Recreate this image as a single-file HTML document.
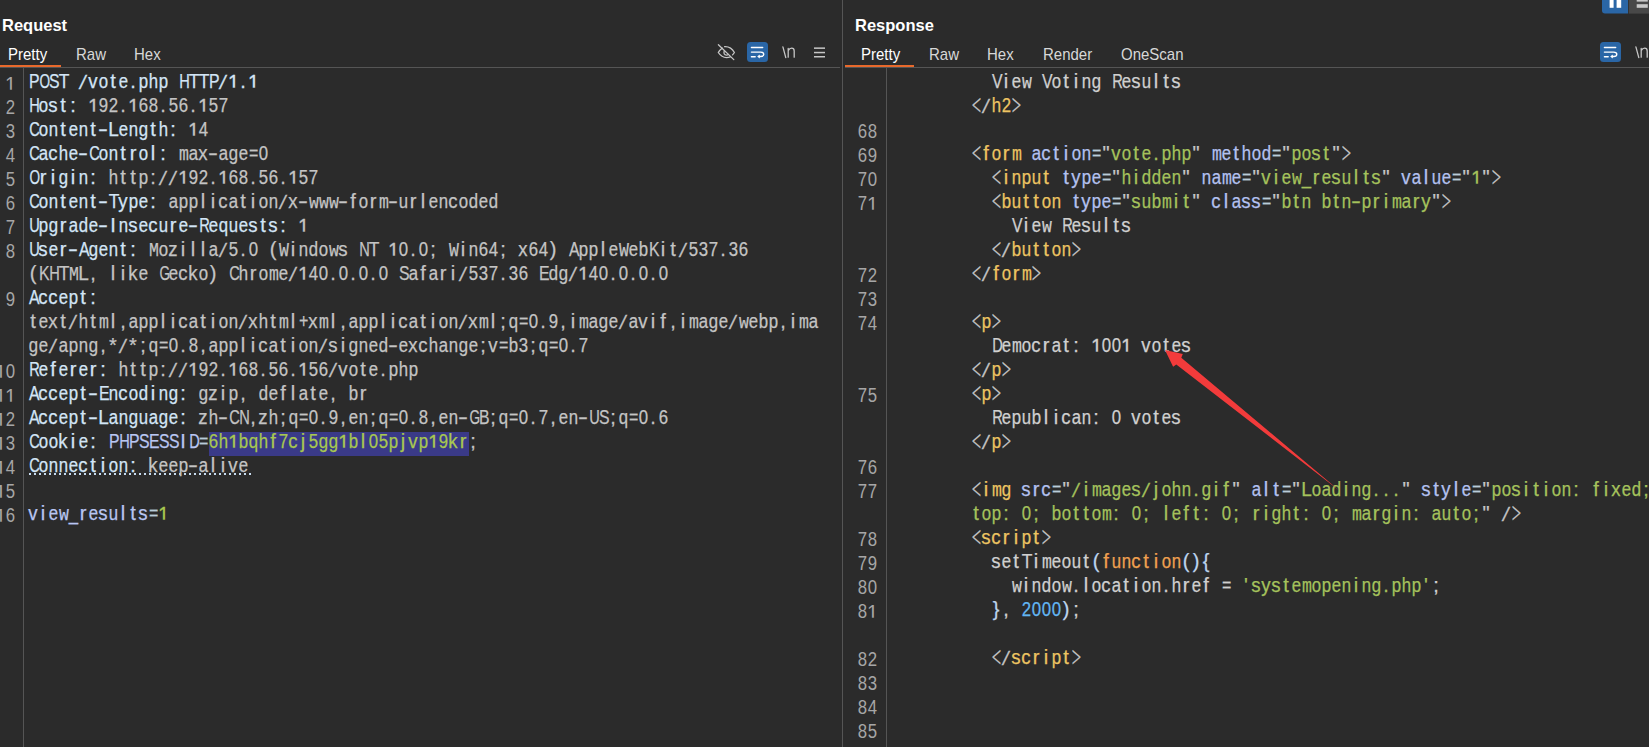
<!DOCTYPE html>
<html><head><meta charset="utf-8"><style>
*{margin:0;padding:0;box-sizing:border-box}
html,body{width:1649px;height:747px;overflow:hidden;background:#2b2b2b}
body{position:relative;font-family:"Liberation Sans",sans-serif}
.abs{position:absolute}
.title{position:absolute;top:14px;font-weight:bold;font-size:16.5px;color:#ffffff;line-height:22px}
.tab{position:absolute;top:43px;font-size:15px;color:#d8d8d8;line-height:22px;transform:scaleY(1.08);transform-origin:0 6px}
.hline{position:absolute;top:67px;height:1px;background:#555555}
.orange{position:absolute;top:65px;height:2px;background:#e8692c}
.vline{position:absolute;width:1px;background:#555555}
.lnbox{position:absolute;top:0;bottom:0;overflow:hidden}
.ln{position:absolute;height:24px;line-height:24px;font-family:"Liberation Sans",sans-serif;font-size:20px;color:#a6a6a6;white-space:pre;text-align:right}
.ln i{font-style:normal;display:inline-block;width:10px;text-align:center}
.code{position:absolute;height:24px;line-height:24px;font-family:"Liberation Sans",sans-serif;font-size:20px;white-space:pre}
.code i{font-style:normal;display:inline-block;width:10px;text-align:center;-webkit-text-stroke:0.25px currentColor}
.hn{color:#d3e5f6}
.hv{color:#c4c4c4}
.ck{color:#b9c6f2}
.gr{color:#a8c850}
.tx{color:#d0d0d0}
.pu{color:#c6c6c6}
.tag{color:#edc462}
.at{color:#b3c1f0}
.av{color:#a5c25c}
.kw{color:#f0a050}
.br{color:#bcd4ee}
.num{color:#62b6f2}
.eq{color:#b9ccd9}

.hlbox{position:absolute;background:#3a3a88}
.code i.ang,.ln i.ang{font-family:"Liberation Serif",serif;transform:scale(0.83,1.5);transform-origin:50% 12.2px}
.code i.mo,.ln i.mo{font-family:"Liberation Mono",monospace;transform:scaleX(0.825)}
.code i.one,.ln i.one{clip-path:inset(0 0 7px 0);transform:scaleY(1.14);transform-origin:50% 5.2px}
.code i.sl,.ln i.sl{font-family:"Liberation Serif",serif;transform:scale(1.5,1.1);transform-origin:50% 12px}
.code i.sx150,.ln i.sx150{transform:scaleX(1.5)}
.code i.sx68,.ln i.sx68{transform:scaleX(0.68)}
.code i.sx73,.ln i.sx73{transform:scaleX(0.73)}
.code i.sx79,.ln i.sx79{transform:scaleX(0.79)}
.code i.sx80,.ln i.sx80{transform:scaleX(0.8)}
.code i.sx84,.ln i.sx84{transform:scaleX(0.84)}
.code i.sx87,.ln i.sx87{transform:scaleX(0.87)}
.code i.sx93,.ln i.sx93{transform:scaleX(0.93)}
.code i.sx95,.ln i.sx95{transform:scaleX(0.95)}

.dot{text-decoration:underline dotted #b8d4ee;text-underline-offset:3px}
</style></head><body>
<!-- left panel -->
<div class="title" style="left:2px">Request</div>
<div class="tab" style="left:8px;color:#ffffff">Pretty</div>
<div class="tab" style="left:76px">Raw</div>
<div class="tab" style="left:134px">Hex</div>
<div class="orange" style="left:0;width:61px"></div>
<div class="hline" style="left:0;width:840px"></div>
<div class="vline" style="left:23px;top:68px;height:679px"></div>
<div class="hlbox" style="left:209px;top:432px;width:260px;height:24px"></div>
<div class="abs" style="left:29px;top:473px;width:223px;height:2px;background:repeating-linear-gradient(90deg,#c8dcf0 0,#c8dcf0 2px,transparent 2px,transparent 5px)"></div>
<div class="lnbox" style="left:0;width:20px;top:0;height:747px">
<div class="ln" style="top:71px;right:5px"><i class="one">1</i></div>
<div class="ln" style="top:95px;right:5px"><i class="sx84">2</i></div>
<div class="ln" style="top:119px;right:5px"><i class="sx84">3</i></div>
<div class="ln" style="top:143px;right:5px"><i class="sx84">4</i></div>
<div class="ln" style="top:167px;right:5px"><i class="sx84">5</i></div>
<div class="ln" style="top:191px;right:5px"><i class="sx84">6</i></div>
<div class="ln" style="top:215px;right:5px"><i class="sx84">7</i></div>
<div class="ln" style="top:239px;right:5px"><i class="sx84">8</i></div>
<div class="ln" style="top:287px;right:5px"><i class="sx84">9</i></div>
<div class="ln" style="top:359px;right:5px"><i class="one">1</i><i class="sx84">0</i></div>
<div class="ln" style="top:383px;right:5px"><i class="one">1</i><i class="one">1</i></div>
<div class="ln" style="top:407px;right:5px"><i class="one">1</i><i class="sx84">2</i></div>
<div class="ln" style="top:431px;right:5px"><i class="one">1</i><i class="sx84">3</i></div>
<div class="ln" style="top:455px;right:5px"><i class="one">1</i><i class="sx84">4</i></div>
<div class="ln" style="top:479px;right:5px"><i class="one">1</i><i class="sx84">5</i></div>
<div class="ln" style="top:503px;right:5px"><i class="one">1</i><i class="sx84">6</i></div>
</div>
<div class="code" style="top:69px;left:28px"><span class="hn"><i class="sx79">P</i><i class="sx68">O</i><i class="sx79">S</i><i class="sx87">T</i><i> </i><i class="sl">/</i><i class="sx93">v</i><i class="sx84">o</i><i>t</i><i class="sx84">e</i><i>.</i><i class="sx84">p</i><i class="sx84">h</i><i class="sx84">p</i><i> </i><i class="sx73">H</i><i class="sx87">T</i><i class="sx87">T</i><i class="sx79">P</i><i class="sl">/</i><i class="one">1</i><i>.</i><i class="one">1</i></span></div><div class="code" style="top:93px;left:28px"><span class="hn"><i class="sx73">H</i><i class="sx84">o</i><i class="sx93">s</i><i>t</i><i>:</i></span><span class="hv"><i> </i><i class="one">1</i><i class="sx84">9</i><i class="sx84">2</i><i>.</i><i class="one">1</i><i class="sx84">6</i><i class="sx84">8</i><i>.</i><i class="sx84">5</i><i class="sx84">6</i><i>.</i><i class="one">1</i><i class="sx84">5</i><i class="sx84">7</i></span></div><div class="code" style="top:117px;left:28px"><span class="hn"><i class="sx73">C</i><i class="sx84">o</i><i class="sx84">n</i><i>t</i><i class="sx84">e</i><i class="sx84">n</i><i>t</i><i class="sx150">-</i><i class="sx95">L</i><i class="sx84">e</i><i class="sx84">n</i><i class="sx84">g</i><i>t</i><i class="sx84">h</i><i>:</i></span><span class="hv"><i> </i><i class="one">1</i><i class="sx84">4</i></span></div><div class="code" style="top:141px;left:28px"><span class="hn"><i class="sx73">C</i><i class="sx84">a</i><i class="sx93">c</i><i class="sx84">h</i><i class="sx84">e</i><i class="sx150">-</i><i class="sx73">C</i><i class="sx84">o</i><i class="sx84">n</i><i>t</i><i>r</i><i class="sx84">o</i><i>l</i><i>:</i></span><span class="hv"><i> </i><i class="mo">m</i><i class="sx84">a</i><i class="sx93">x</i><i class="sx150">-</i><i class="sx84">a</i><i class="sx84">g</i><i class="sx84">e</i><i class="sx80">=</i><i class="sx84">0</i></span></div><div class="code" style="top:165px;left:28px"><span class="hn"><i class="sx68">O</i><i>r</i><i>i</i><i class="sx84">g</i><i>i</i><i class="sx84">n</i><i>:</i></span><span class="hv"><i> </i><i class="sx84">h</i><i>t</i><i>t</i><i class="sx84">p</i><i>:</i><i class="sl">/</i><i class="sl">/</i><i class="one">1</i><i class="sx84">9</i><i class="sx84">2</i><i>.</i><i class="one">1</i><i class="sx84">6</i><i class="sx84">8</i><i>.</i><i class="sx84">5</i><i class="sx84">6</i><i>.</i><i class="one">1</i><i class="sx84">5</i><i class="sx84">7</i></span></div><div class="code" style="top:189px;left:28px"><span class="hn"><i class="sx73">C</i><i class="sx84">o</i><i class="sx84">n</i><i>t</i><i class="sx84">e</i><i class="sx84">n</i><i>t</i><i class="sx150">-</i><i class="sx87">T</i><i class="sx93">y</i><i class="sx84">p</i><i class="sx84">e</i><i>:</i></span><span class="hv"><i> </i><i class="sx84">a</i><i class="sx84">p</i><i class="sx84">p</i><i>l</i><i>i</i><i class="sx93">c</i><i class="sx84">a</i><i>t</i><i>i</i><i class="sx84">o</i><i class="sx84">n</i><i class="sl">/</i><i class="sx93">x</i><i class="sx150">-</i><i class="mo">w</i><i class="mo">w</i><i class="mo">w</i><i class="sx150">-</i><i>f</i><i class="sx84">o</i><i>r</i><i class="mo">m</i><i class="sx150">-</i><i class="sx84">u</i><i>r</i><i>l</i><i class="sx84">e</i><i class="sx84">n</i><i class="sx93">c</i><i class="sx84">o</i><i class="sx84">d</i><i class="sx84">e</i><i class="sx84">d</i></span></div><div class="code" style="top:213px;left:28px"><span class="hn"><i class="sx73">U</i><i class="sx84">p</i><i class="sx84">g</i><i>r</i><i class="sx84">a</i><i class="sx84">d</i><i class="sx84">e</i><i class="sx150">-</i><i>I</i><i class="sx84">n</i><i class="sx93">s</i><i class="sx84">e</i><i class="sx93">c</i><i class="sx84">u</i><i>r</i><i class="sx84">e</i><i class="sx150">-</i><i class="sx73">R</i><i class="sx84">e</i><i class="sx84">q</i><i class="sx84">u</i><i class="sx84">e</i><i class="sx93">s</i><i>t</i><i class="sx93">s</i><i>:</i></span><span class="hv"><i> </i><i class="one">1</i></span></div><div class="code" style="top:237px;left:28px"><span class="hn"><i class="sx73">U</i><i class="sx93">s</i><i class="sx84">e</i><i>r</i><i class="sx150">-</i><i class="sx79">A</i><i class="sx84">g</i><i class="sx84">e</i><i class="sx84">n</i><i>t</i><i>:</i></span><span class="hv"><i> </i><i class="mo">M</i><i class="sx84">o</i><i class="sx93">z</i><i>i</i><i>l</i><i>l</i><i class="sx84">a</i><i class="sl">/</i><i class="sx84">5</i><i>.</i><i class="sx84">0</i><i> </i><i>(</i><i class="mo">W</i><i>i</i><i class="sx84">n</i><i class="sx84">d</i><i class="sx84">o</i><i class="mo">w</i><i class="sx93">s</i><i> </i><i class="sx73">N</i><i class="sx87">T</i><i> </i><i class="one">1</i><i class="sx84">0</i><i>.</i><i class="sx84">0</i><i>;</i><i> </i><i class="mo">W</i><i>i</i><i class="sx84">n</i><i class="sx84">6</i><i class="sx84">4</i><i>;</i><i> </i><i class="sx93">x</i><i class="sx84">6</i><i class="sx84">4</i><i>)</i><i> </i><i class="sx79">A</i><i class="sx84">p</i><i class="sx84">p</i><i>l</i><i class="sx84">e</i><i class="mo">W</i><i class="sx84">e</i><i class="sx84">b</i><i class="sx79">K</i><i>i</i><i>t</i><i class="sl">/</i><i class="sx84">5</i><i class="sx84">3</i><i class="sx84">7</i><i>.</i><i class="sx84">3</i><i class="sx84">6</i></span></div><div class="code" style="top:261px;left:28px"><span class="hv"><i>(</i><i class="sx79">K</i><i class="sx73">H</i><i class="sx87">T</i><i class="mo">M</i><i class="sx95">L</i><i>,</i><i> </i><i>l</i><i>i</i><i class="sx93">k</i><i class="sx84">e</i><i> </i><i class="sx68">G</i><i class="sx84">e</i><i class="sx93">c</i><i class="sx93">k</i><i class="sx84">o</i><i>)</i><i> </i><i class="sx73">C</i><i class="sx84">h</i><i>r</i><i class="sx84">o</i><i class="mo">m</i><i class="sx84">e</i><i class="sl">/</i><i class="one">1</i><i class="sx84">4</i><i class="sx84">0</i><i>.</i><i class="sx84">0</i><i>.</i><i class="sx84">0</i><i>.</i><i class="sx84">0</i><i> </i><i class="sx79">S</i><i class="sx84">a</i><i>f</i><i class="sx84">a</i><i>r</i><i>i</i><i class="sl">/</i><i class="sx84">5</i><i class="sx84">3</i><i class="sx84">7</i><i>.</i><i class="sx84">3</i><i class="sx84">6</i><i> </i><i class="sx79">E</i><i class="sx84">d</i><i class="sx84">g</i><i class="sl">/</i><i class="one">1</i><i class="sx84">4</i><i class="sx84">0</i><i>.</i><i class="sx84">0</i><i>.</i><i class="sx84">0</i><i>.</i><i class="sx84">0</i></span></div><div class="code" style="top:285px;left:28px"><span class="hn"><i class="sx79">A</i><i class="sx93">c</i><i class="sx93">c</i><i class="sx84">e</i><i class="sx84">p</i><i>t</i><i>:</i></span></div><div class="code" style="top:309px;left:28px"><span class="hv"><i>t</i><i class="sx84">e</i><i class="sx93">x</i><i>t</i><i class="sl">/</i><i class="sx84">h</i><i>t</i><i class="mo">m</i><i>l</i><i>,</i><i class="sx84">a</i><i class="sx84">p</i><i class="sx84">p</i><i>l</i><i>i</i><i class="sx93">c</i><i class="sx84">a</i><i>t</i><i>i</i><i class="sx84">o</i><i class="sx84">n</i><i class="sl">/</i><i class="sx93">x</i><i class="sx84">h</i><i>t</i><i class="mo">m</i><i>l</i><i class="sx80">+</i><i class="sx93">x</i><i class="mo">m</i><i>l</i><i>,</i><i class="sx84">a</i><i class="sx84">p</i><i class="sx84">p</i><i>l</i><i>i</i><i class="sx93">c</i><i class="sx84">a</i><i>t</i><i>i</i><i class="sx84">o</i><i class="sx84">n</i><i class="sl">/</i><i class="sx93">x</i><i class="mo">m</i><i>l</i><i>;</i><i class="sx84">q</i><i class="sx80">=</i><i class="sx84">0</i><i>.</i><i class="sx84">9</i><i>,</i><i>i</i><i class="mo">m</i><i class="sx84">a</i><i class="sx84">g</i><i class="sx84">e</i><i class="sl">/</i><i class="sx84">a</i><i class="sx93">v</i><i>i</i><i>f</i><i>,</i><i>i</i><i class="mo">m</i><i class="sx84">a</i><i class="sx84">g</i><i class="sx84">e</i><i class="sl">/</i><i class="mo">w</i><i class="sx84">e</i><i class="sx84">b</i><i class="sx84">p</i><i>,</i><i>i</i><i class="mo">m</i><i class="sx84">a</i></span></div><div class="code" style="top:333px;left:28px"><span class="hv"><i class="sx84">g</i><i class="sx84">e</i><i class="sl">/</i><i class="sx84">a</i><i class="sx84">p</i><i class="sx84">n</i><i class="sx84">g</i><i>,</i><i>*</i><i class="sl">/</i><i>*</i><i>;</i><i class="sx84">q</i><i class="sx80">=</i><i class="sx84">0</i><i>.</i><i class="sx84">8</i><i>,</i><i class="sx84">a</i><i class="sx84">p</i><i class="sx84">p</i><i>l</i><i>i</i><i class="sx93">c</i><i class="sx84">a</i><i>t</i><i>i</i><i class="sx84">o</i><i class="sx84">n</i><i class="sl">/</i><i class="sx93">s</i><i>i</i><i class="sx84">g</i><i class="sx84">n</i><i class="sx84">e</i><i class="sx84">d</i><i class="sx150">-</i><i class="sx84">e</i><i class="sx93">x</i><i class="sx93">c</i><i class="sx84">h</i><i class="sx84">a</i><i class="sx84">n</i><i class="sx84">g</i><i class="sx84">e</i><i>;</i><i class="sx93">v</i><i class="sx80">=</i><i class="sx84">b</i><i class="sx84">3</i><i>;</i><i class="sx84">q</i><i class="sx80">=</i><i class="sx84">0</i><i>.</i><i class="sx84">7</i></span></div><div class="code" style="top:357px;left:28px"><span class="hn"><i class="sx73">R</i><i class="sx84">e</i><i>f</i><i class="sx84">e</i><i>r</i><i class="sx84">e</i><i>r</i><i>:</i></span><span class="hv"><i> </i><i class="sx84">h</i><i>t</i><i>t</i><i class="sx84">p</i><i>:</i><i class="sl">/</i><i class="sl">/</i><i class="one">1</i><i class="sx84">9</i><i class="sx84">2</i><i>.</i><i class="one">1</i><i class="sx84">6</i><i class="sx84">8</i><i>.</i><i class="sx84">5</i><i class="sx84">6</i><i>.</i><i class="one">1</i><i class="sx84">5</i><i class="sx84">6</i><i class="sl">/</i><i class="sx93">v</i><i class="sx84">o</i><i>t</i><i class="sx84">e</i><i>.</i><i class="sx84">p</i><i class="sx84">h</i><i class="sx84">p</i></span></div><div class="code" style="top:381px;left:28px"><span class="hn"><i class="sx79">A</i><i class="sx93">c</i><i class="sx93">c</i><i class="sx84">e</i><i class="sx84">p</i><i>t</i><i class="sx150">-</i><i class="sx79">E</i><i class="sx84">n</i><i class="sx93">c</i><i class="sx84">o</i><i class="sx84">d</i><i>i</i><i class="sx84">n</i><i class="sx84">g</i><i>:</i></span><span class="hv"><i> </i><i class="sx84">g</i><i class="sx93">z</i><i>i</i><i class="sx84">p</i><i>,</i><i> </i><i class="sx84">d</i><i class="sx84">e</i><i>f</i><i>l</i><i class="sx84">a</i><i>t</i><i class="sx84">e</i><i>,</i><i> </i><i class="sx84">b</i><i>r</i></span></div><div class="code" style="top:405px;left:28px"><span class="hn"><i class="sx79">A</i><i class="sx93">c</i><i class="sx93">c</i><i class="sx84">e</i><i class="sx84">p</i><i>t</i><i class="sx150">-</i><i class="sx95">L</i><i class="sx84">a</i><i class="sx84">n</i><i class="sx84">g</i><i class="sx84">u</i><i class="sx84">a</i><i class="sx84">g</i><i class="sx84">e</i><i>:</i></span><span class="hv"><i> </i><i class="sx93">z</i><i class="sx84">h</i><i class="sx150">-</i><i class="sx73">C</i><i class="sx73">N</i><i>,</i><i class="sx93">z</i><i class="sx84">h</i><i>;</i><i class="sx84">q</i><i class="sx80">=</i><i class="sx84">0</i><i>.</i><i class="sx84">9</i><i>,</i><i class="sx84">e</i><i class="sx84">n</i><i>;</i><i class="sx84">q</i><i class="sx80">=</i><i class="sx84">0</i><i>.</i><i class="sx84">8</i><i>,</i><i class="sx84">e</i><i class="sx84">n</i><i class="sx150">-</i><i class="sx68">G</i><i class="sx79">B</i><i>;</i><i class="sx84">q</i><i class="sx80">=</i><i class="sx84">0</i><i>.</i><i class="sx84">7</i><i>,</i><i class="sx84">e</i><i class="sx84">n</i><i class="sx150">-</i><i class="sx73">U</i><i class="sx79">S</i><i>;</i><i class="sx84">q</i><i class="sx80">=</i><i class="sx84">0</i><i>.</i><i class="sx84">6</i></span></div><div class="code" style="top:429px;left:28px"><span class="hn"><i class="sx73">C</i><i class="sx84">o</i><i class="sx84">o</i><i class="sx93">k</i><i>i</i><i class="sx84">e</i><i>:</i></span><span class="hv"><i> </i></span><span class="ck"><i class="sx79">P</i><i class="sx73">H</i><i class="sx79">P</i><i class="sx79">S</i><i class="sx79">E</i><i class="sx79">S</i><i class="sx79">S</i><i>I</i><i class="sx73">D</i></span><span class="eq"><i class="sx80">=</i></span><span class="gr"><i class="sx84">6</i><i class="sx84">h</i><i class="one">1</i><i class="sx84">b</i><i class="sx84">q</i><i class="sx84">h</i><i>f</i><i class="sx84">7</i><i class="sx93">c</i><i>j</i><i class="sx84">5</i><i class="sx84">g</i><i class="sx84">g</i><i class="one">1</i><i class="sx84">b</i><i>l</i><i class="sx84">0</i><i class="sx84">5</i><i class="sx84">p</i><i>j</i><i class="sx93">v</i><i class="sx84">p</i><i class="one">1</i><i class="sx84">9</i><i class="sx93">k</i><i>r</i></span><span class="hv"><i>;</i></span></div><div class="code" style="top:453px;left:28px"><span class="hn"><i class="sx73">C</i><i class="sx84">o</i><i class="sx84">n</i><i class="sx84">n</i><i class="sx84">e</i><i class="sx93">c</i><i>t</i><i>i</i><i class="sx84">o</i><i class="sx84">n</i><i>:</i></span><span class="hv"><i> </i><i class="sx93">k</i><i class="sx84">e</i><i class="sx84">e</i><i class="sx84">p</i><i class="sx150">-</i><i class="sx84">a</i><i>l</i><i>i</i><i class="sx93">v</i><i class="sx84">e</i></span></div><div class="code" style="top:501px;left:28px"><span class="ck"><i class="sx93">v</i><i>i</i><i class="sx84">e</i><i class="mo">w</i><i class="sx84">_</i><i>r</i><i class="sx84">e</i><i class="sx93">s</i><i class="sx84">u</i><i>l</i><i>t</i><i class="sx93">s</i></span><span class="eq"><i class="sx80">=</i></span><span class="gr"><i class="one">1</i></span></div>

<!-- divider -->
<div class="vline" style="left:842px;top:0;height:747px"></div>

<!-- right panel -->
<div class="title" style="left:855px">Response</div>
<div class="tab" style="left:861px;color:#ffffff">Pretty</div>
<div class="tab" style="left:929px">Raw</div>
<div class="tab" style="left:987px">Hex</div>
<div class="tab" style="left:1043px">Render</div>
<div class="tab" style="left:1121px">OneScan</div>
<div class="orange" style="left:845px;width:69px"></div>
<div class="hline" style="left:845px;width:804px"></div>
<div class="vline" style="left:886px;top:68px;height:679px"></div>
<div class="ln" style="top:119px;left:847px;width:30px"><i class="sx84">6</i><i class="sx84">8</i></div><div class="ln" style="top:143px;left:847px;width:30px"><i class="sx84">6</i><i class="sx84">9</i></div><div class="ln" style="top:167px;left:847px;width:30px"><i class="sx84">7</i><i class="sx84">0</i></div><div class="ln" style="top:191px;left:847px;width:30px"><i class="sx84">7</i><i class="one">1</i></div><div class="ln" style="top:263px;left:847px;width:30px"><i class="sx84">7</i><i class="sx84">2</i></div><div class="ln" style="top:287px;left:847px;width:30px"><i class="sx84">7</i><i class="sx84">3</i></div><div class="ln" style="top:311px;left:847px;width:30px"><i class="sx84">7</i><i class="sx84">4</i></div><div class="ln" style="top:383px;left:847px;width:30px"><i class="sx84">7</i><i class="sx84">5</i></div><div class="ln" style="top:455px;left:847px;width:30px"><i class="sx84">7</i><i class="sx84">6</i></div><div class="ln" style="top:479px;left:847px;width:30px"><i class="sx84">7</i><i class="sx84">7</i></div><div class="ln" style="top:527px;left:847px;width:30px"><i class="sx84">7</i><i class="sx84">8</i></div><div class="ln" style="top:551px;left:847px;width:30px"><i class="sx84">7</i><i class="sx84">9</i></div><div class="ln" style="top:575px;left:847px;width:30px"><i class="sx84">8</i><i class="sx84">0</i></div><div class="ln" style="top:599px;left:847px;width:30px"><i class="sx84">8</i><i class="one">1</i></div><div class="ln" style="top:647px;left:847px;width:30px"><i class="sx84">8</i><i class="sx84">2</i></div><div class="ln" style="top:671px;left:847px;width:30px"><i class="sx84">8</i><i class="sx84">3</i></div><div class="ln" style="top:695px;left:847px;width:30px"><i class="sx84">8</i><i class="sx84">4</i></div><div class="ln" style="top:719px;left:847px;width:30px"><i class="sx84">8</i><i class="sx84">5</i></div>
<div class="code" style="top:69px;left:891px"><span class="tx"><i> </i><i> </i><i> </i><i> </i><i> </i><i> </i><i> </i><i> </i><i> </i><i> </i></span><span class="tx"><i class="sx79">V</i><i>i</i><i class="sx84">e</i><i class="mo">w</i><i> </i><i class="sx79">V</i><i class="sx84">o</i><i>t</i><i>i</i><i class="sx84">n</i><i class="sx84">g</i><i> </i><i class="sx73">R</i><i class="sx84">e</i><i class="sx93">s</i><i class="sx84">u</i><i>l</i><i>t</i><i class="sx93">s</i></span></div><div class="code" style="top:93px;left:891px"><span class="tx"><i> </i><i> </i><i> </i><i> </i><i> </i><i> </i><i> </i><i> </i></span><span class="pu"><i class="ang">&lt;</i><i class="sl">/</i></span><span class="tag"><i class="sx84">h</i><i class="sx84">2</i></span><span class="pu"><i class="ang">&gt;</i></span></div><div class="code" style="top:141px;left:891px"><span class="tx"><i> </i><i> </i><i> </i><i> </i><i> </i><i> </i><i> </i><i> </i></span><span class="pu"><i class="ang">&lt;</i></span><span class="tag"><i>f</i><i class="sx84">o</i><i>r</i><i class="mo">m</i></span><span class="tx"><i> </i></span><span class="at"><i class="sx84">a</i><i class="sx93">c</i><i>t</i><i>i</i><i class="sx84">o</i><i class="sx84">n</i></span><span class="eq"><i class="sx80">=</i></span><span class="pu"><i>&quot;</i></span><span class="av"><i class="sx93">v</i><i class="sx84">o</i><i>t</i><i class="sx84">e</i><i>.</i><i class="sx84">p</i><i class="sx84">h</i><i class="sx84">p</i></span><span class="pu"><i>&quot;</i></span><span class="tx"><i> </i></span><span class="at"><i class="mo">m</i><i class="sx84">e</i><i>t</i><i class="sx84">h</i><i class="sx84">o</i><i class="sx84">d</i></span><span class="eq"><i class="sx80">=</i></span><span class="pu"><i>&quot;</i></span><span class="av"><i class="sx84">p</i><i class="sx84">o</i><i class="sx93">s</i><i>t</i></span><span class="pu"><i>&quot;</i><i class="ang">&gt;</i></span></div><div class="code" style="top:165px;left:891px"><span class="tx"><i> </i><i> </i><i> </i><i> </i><i> </i><i> </i><i> </i><i> </i><i> </i><i> </i></span><span class="pu"><i class="ang">&lt;</i></span><span class="tag"><i>i</i><i class="sx84">n</i><i class="sx84">p</i><i class="sx84">u</i><i>t</i></span><span class="tx"><i> </i></span><span class="at"><i>t</i><i class="sx93">y</i><i class="sx84">p</i><i class="sx84">e</i></span><span class="eq"><i class="sx80">=</i></span><span class="pu"><i>&quot;</i></span><span class="av"><i class="sx84">h</i><i>i</i><i class="sx84">d</i><i class="sx84">d</i><i class="sx84">e</i><i class="sx84">n</i></span><span class="pu"><i>&quot;</i></span><span class="tx"><i> </i></span><span class="at"><i class="sx84">n</i><i class="sx84">a</i><i class="mo">m</i><i class="sx84">e</i></span><span class="eq"><i class="sx80">=</i></span><span class="pu"><i>&quot;</i></span><span class="av"><i class="sx93">v</i><i>i</i><i class="sx84">e</i><i class="mo">w</i><i class="sx84">_</i><i>r</i><i class="sx84">e</i><i class="sx93">s</i><i class="sx84">u</i><i>l</i><i>t</i><i class="sx93">s</i></span><span class="pu"><i>&quot;</i></span><span class="tx"><i> </i></span><span class="at"><i class="sx93">v</i><i class="sx84">a</i><i>l</i><i class="sx84">u</i><i class="sx84">e</i></span><span class="eq"><i class="sx80">=</i></span><span class="pu"><i>&quot;</i></span><span class="av"><i class="one">1</i></span><span class="pu"><i>&quot;</i><i class="ang">&gt;</i></span></div><div class="code" style="top:189px;left:891px"><span class="tx"><i> </i><i> </i><i> </i><i> </i><i> </i><i> </i><i> </i><i> </i><i> </i><i> </i></span><span class="pu"><i class="ang">&lt;</i></span><span class="tag"><i class="sx84">b</i><i class="sx84">u</i><i>t</i><i>t</i><i class="sx84">o</i><i class="sx84">n</i></span><span class="tx"><i> </i></span><span class="at"><i>t</i><i class="sx93">y</i><i class="sx84">p</i><i class="sx84">e</i></span><span class="eq"><i class="sx80">=</i></span><span class="pu"><i>&quot;</i></span><span class="av"><i class="sx93">s</i><i class="sx84">u</i><i class="sx84">b</i><i class="mo">m</i><i>i</i><i>t</i></span><span class="pu"><i>&quot;</i></span><span class="tx"><i> </i></span><span class="at"><i class="sx93">c</i><i>l</i><i class="sx84">a</i><i class="sx93">s</i><i class="sx93">s</i></span><span class="eq"><i class="sx80">=</i></span><span class="pu"><i>&quot;</i></span><span class="av"><i class="sx84">b</i><i>t</i><i class="sx84">n</i><i> </i><i class="sx84">b</i><i>t</i><i class="sx84">n</i><i class="sx150">-</i><i class="sx84">p</i><i>r</i><i>i</i><i class="mo">m</i><i class="sx84">a</i><i>r</i><i class="sx93">y</i></span><span class="pu"><i>&quot;</i><i class="ang">&gt;</i></span></div><div class="code" style="top:213px;left:891px"><span class="tx"><i> </i><i> </i><i> </i><i> </i><i> </i><i> </i><i> </i><i> </i><i> </i><i> </i><i> </i><i> </i></span><span class="tx"><i class="sx79">V</i><i>i</i><i class="sx84">e</i><i class="mo">w</i><i> </i><i class="sx73">R</i><i class="sx84">e</i><i class="sx93">s</i><i class="sx84">u</i><i>l</i><i>t</i><i class="sx93">s</i></span></div><div class="code" style="top:237px;left:891px"><span class="tx"><i> </i><i> </i><i> </i><i> </i><i> </i><i> </i><i> </i><i> </i><i> </i><i> </i></span><span class="pu"><i class="ang">&lt;</i><i class="sl">/</i></span><span class="tag"><i class="sx84">b</i><i class="sx84">u</i><i>t</i><i>t</i><i class="sx84">o</i><i class="sx84">n</i></span><span class="pu"><i class="ang">&gt;</i></span></div><div class="code" style="top:261px;left:891px"><span class="tx"><i> </i><i> </i><i> </i><i> </i><i> </i><i> </i><i> </i><i> </i></span><span class="pu"><i class="ang">&lt;</i><i class="sl">/</i></span><span class="tag"><i>f</i><i class="sx84">o</i><i>r</i><i class="mo">m</i></span><span class="pu"><i class="ang">&gt;</i></span></div><div class="code" style="top:309px;left:891px"><span class="tx"><i> </i><i> </i><i> </i><i> </i><i> </i><i> </i><i> </i><i> </i></span><span class="pu"><i class="ang">&lt;</i></span><span class="tag"><i class="sx84">p</i></span><span class="pu"><i class="ang">&gt;</i></span></div><div class="code" style="top:333px;left:891px"><span class="tx"><i> </i><i> </i><i> </i><i> </i><i> </i><i> </i><i> </i><i> </i><i> </i><i> </i></span><span class="tx"><i class="sx73">D</i><i class="sx84">e</i><i class="mo">m</i><i class="sx84">o</i><i class="sx93">c</i><i>r</i><i class="sx84">a</i><i>t</i><i>:</i><i> </i><i class="one">1</i><i class="sx84">0</i><i class="sx84">0</i><i class="one">1</i><i> </i><i class="sx93">v</i><i class="sx84">o</i><i>t</i><i class="sx84">e</i><i class="sx93">s</i></span></div><div class="code" style="top:357px;left:891px"><span class="tx"><i> </i><i> </i><i> </i><i> </i><i> </i><i> </i><i> </i><i> </i></span><span class="pu"><i class="ang">&lt;</i><i class="sl">/</i></span><span class="tag"><i class="sx84">p</i></span><span class="pu"><i class="ang">&gt;</i></span></div><div class="code" style="top:381px;left:891px"><span class="tx"><i> </i><i> </i><i> </i><i> </i><i> </i><i> </i><i> </i><i> </i></span><span class="pu"><i class="ang">&lt;</i></span><span class="tag"><i class="sx84">p</i></span><span class="pu"><i class="ang">&gt;</i></span></div><div class="code" style="top:405px;left:891px"><span class="tx"><i> </i><i> </i><i> </i><i> </i><i> </i><i> </i><i> </i><i> </i><i> </i><i> </i></span><span class="tx"><i class="sx73">R</i><i class="sx84">e</i><i class="sx84">p</i><i class="sx84">u</i><i class="sx84">b</i><i>l</i><i>i</i><i class="sx93">c</i><i class="sx84">a</i><i class="sx84">n</i><i>:</i><i> </i><i class="sx84">0</i><i> </i><i class="sx93">v</i><i class="sx84">o</i><i>t</i><i class="sx84">e</i><i class="sx93">s</i></span></div><div class="code" style="top:429px;left:891px"><span class="tx"><i> </i><i> </i><i> </i><i> </i><i> </i><i> </i><i> </i><i> </i></span><span class="pu"><i class="ang">&lt;</i><i class="sl">/</i></span><span class="tag"><i class="sx84">p</i></span><span class="pu"><i class="ang">&gt;</i></span></div><div class="code" style="top:477px;left:891px"><span class="tx"><i> </i><i> </i><i> </i><i> </i><i> </i><i> </i><i> </i><i> </i></span><span class="pu"><i class="ang">&lt;</i></span><span class="tag"><i>i</i><i class="mo">m</i><i class="sx84">g</i></span><span class="tx"><i> </i></span><span class="at"><i class="sx93">s</i><i>r</i><i class="sx93">c</i></span><span class="eq"><i class="sx80">=</i></span><span class="pu"><i>&quot;</i></span><span class="av"><i class="sl">/</i><i>i</i><i class="mo">m</i><i class="sx84">a</i><i class="sx84">g</i><i class="sx84">e</i><i class="sx93">s</i><i class="sl">/</i><i>j</i><i class="sx84">o</i><i class="sx84">h</i><i class="sx84">n</i><i>.</i><i class="sx84">g</i><i>i</i><i>f</i></span><span class="pu"><i>&quot;</i></span><span class="tx"><i> </i></span><span class="at"><i class="sx84">a</i><i>l</i><i>t</i></span><span class="eq"><i class="sx80">=</i></span><span class="pu"><i>&quot;</i></span><span class="av"><i class="sx95">L</i><i class="sx84">o</i><i class="sx84">a</i><i class="sx84">d</i><i>i</i><i class="sx84">n</i><i class="sx84">g</i><i>.</i><i>.</i><i>.</i></span><span class="pu"><i>&quot;</i></span><span class="tx"><i> </i></span><span class="at"><i class="sx93">s</i><i>t</i><i class="sx93">y</i><i>l</i><i class="sx84">e</i></span><span class="eq"><i class="sx80">=</i></span><span class="pu"><i>&quot;</i></span><span class="av"><i class="sx84">p</i><i class="sx84">o</i><i class="sx93">s</i><i>i</i><i>t</i><i>i</i><i class="sx84">o</i><i class="sx84">n</i><i>:</i><i> </i><i>f</i><i>i</i><i class="sx93">x</i><i class="sx84">e</i><i class="sx84">d</i><i>;</i></span></div><div class="code" style="top:501px;left:891px"><span class="tx"><i> </i><i> </i><i> </i><i> </i><i> </i><i> </i><i> </i><i> </i></span><span class="av"><i>t</i><i class="sx84">o</i><i class="sx84">p</i><i>:</i><i> </i><i class="sx84">0</i><i>;</i><i> </i><i class="sx84">b</i><i class="sx84">o</i><i>t</i><i>t</i><i class="sx84">o</i><i class="mo">m</i><i>:</i><i> </i><i class="sx84">0</i><i>;</i><i> </i><i>l</i><i class="sx84">e</i><i>f</i><i>t</i><i>:</i><i> </i><i class="sx84">0</i><i>;</i><i> </i><i>r</i><i>i</i><i class="sx84">g</i><i class="sx84">h</i><i>t</i><i>:</i><i> </i><i class="sx84">0</i><i>;</i><i> </i><i class="mo">m</i><i class="sx84">a</i><i>r</i><i class="sx84">g</i><i>i</i><i class="sx84">n</i><i>:</i><i> </i><i class="sx84">a</i><i class="sx84">u</i><i>t</i><i class="sx84">o</i><i>;</i></span><span class="pu"><i>&quot;</i></span><span class="tx"><i> </i></span><span class="pu"><i class="sl">/</i><i class="ang">&gt;</i></span></div><div class="code" style="top:525px;left:891px"><span class="tx"><i> </i><i> </i><i> </i><i> </i><i> </i><i> </i><i> </i><i> </i></span><span class="pu"><i class="ang">&lt;</i></span><span class="tag"><i class="sx93">s</i><i class="sx93">c</i><i>r</i><i>i</i><i class="sx84">p</i><i>t</i></span><span class="pu"><i class="ang">&gt;</i></span></div><div class="code" style="top:549px;left:891px"><span class="tx"><i> </i><i> </i><i> </i><i> </i><i> </i><i> </i><i> </i><i> </i><i> </i><i> </i></span><span class="tx"><i class="sx93">s</i><i class="sx84">e</i><i>t</i><i class="sx87">T</i><i>i</i><i class="mo">m</i><i class="sx84">e</i><i class="sx84">o</i><i class="sx84">u</i><i>t</i></span><span class="br"><i>(</i></span><span class="kw"><i>f</i><i class="sx84">u</i><i class="sx84">n</i><i class="sx93">c</i><i>t</i><i>i</i><i class="sx84">o</i><i class="sx84">n</i></span><span class="br"><i>(</i><i>)</i><i>{</i></span></div><div class="code" style="top:573px;left:891px"><span class="tx"><i> </i><i> </i><i> </i><i> </i><i> </i><i> </i><i> </i><i> </i><i> </i><i> </i><i> </i><i> </i></span><span class="tx"><i class="mo">w</i><i>i</i><i class="sx84">n</i><i class="sx84">d</i><i class="sx84">o</i><i class="mo">w</i><i>.</i><i>l</i><i class="sx84">o</i><i class="sx93">c</i><i class="sx84">a</i><i>t</i><i>i</i><i class="sx84">o</i><i class="sx84">n</i><i>.</i><i class="sx84">h</i><i>r</i><i class="sx84">e</i><i>f</i><i> </i><i class="sx80">=</i><i> </i></span><span class="av"><i>&#x27;</i><i class="sx93">s</i><i class="sx93">y</i><i class="sx93">s</i><i>t</i><i class="sx84">e</i><i class="mo">m</i><i class="sx84">o</i><i class="sx84">p</i><i class="sx84">e</i><i class="sx84">n</i><i>i</i><i class="sx84">n</i><i class="sx84">g</i><i>.</i><i class="sx84">p</i><i class="sx84">h</i><i class="sx84">p</i><i>&#x27;</i></span><span class="tx"><i>;</i></span></div><div class="code" style="top:597px;left:891px"><span class="tx"><i> </i><i> </i><i> </i><i> </i><i> </i><i> </i><i> </i><i> </i><i> </i><i> </i></span><span class="br"><i>}</i></span><span class="tx"><i>,</i><i> </i></span><span class="num"><i class="sx84">2</i><i class="sx84">0</i><i class="sx84">0</i><i class="sx84">0</i></span><span class="br"><i>)</i></span><span class="tx"><i>;</i></span></div><div class="code" style="top:645px;left:891px"><span class="tx"><i> </i><i> </i><i> </i><i> </i><i> </i><i> </i><i> </i><i> </i><i> </i><i> </i></span><span class="pu"><i class="ang">&lt;</i><i class="sl">/</i></span><span class="tag"><i class="sx93">s</i><i class="sx93">c</i><i>r</i><i>i</i><i class="sx84">p</i><i>t</i></span><span class="pu"><i class="ang">&gt;</i></span></div>

<!-- ICONS -->
<svg class="abs" style="left:0;top:0" width="1649" height="70" viewBox="0 0 1649 70">
 <g fill="none" stroke="#c6c6c6" stroke-width="1.3" stroke-linecap="round">
  <!-- eye slash -->
  <path d="M718.4 44.7 L733.8 59.6"/>
  <path d="M724.6 46.6 Q731 46.2 734.4 52.5 Q733.6 53.8 732.5 54.9"/>
  <path d="M722.4 48.1 Q719.8 50 718.3 52.5 Q723 59.5 730.4 56.8"/>
  <path d="M724.2 51.2 Q723.2 54.8 726.5 55.2 Q727.6 55.2 728.2 54.4"/>
  <!-- \n -->
  <path d="M782.9 46.8 L785.8 57.6"/>
  <path d="M788.2 57.2 L788.2 48.4 M788.2 50.6 Q789.6 48.2 791.6 48.2 Q794.2 48.2 794.2 51 L794.2 57.2"/>
 </g>
 <g fill="#c6c6c6">
  <rect x="814" y="47.4" width="11" height="1.5"/>
  <rect x="814" y="51.8" width="11" height="1.5"/>
  <rect x="814" y="56.0" width="11" height="1.5"/>
 </g>
 <!-- wrap button left -->
 <rect x="747" y="42" width="21" height="20" rx="3.5" fill="#2a66a6"/>
 <g fill="none" stroke="#ffffff" stroke-width="1.35" stroke-linecap="round">
  <path d="M751.4 47.5 L762.7 47.5"/>
  <path d="M751.4 52.1 L760.6 52.1 Q763.8 52.1 763.8 54.3 Q763.8 56.5 760.6 56.5 L758.4 56.5"/>
  <path d="M751.4 56.7 L755.2 56.7"/>
 </g>
 <path d="M757.3 56.5 L759.8 54.6 L759.8 58.4 Z" fill="#ffffff"/>
 <!-- wrap button right -->
 <rect x="1600" y="42" width="21" height="20" rx="3.5" fill="#2a66a6"/>
 <g fill="none" stroke="#ffffff" stroke-width="1.35" stroke-linecap="round">
  <path d="M1604.4 47.5 L1615.7 47.5"/>
  <path d="M1604.4 52.1 L1613.6 52.1 Q1616.8 52.1 1616.8 54.3 Q1616.8 56.5 1613.6 56.5 L1611.4 56.5"/>
  <path d="M1604.4 56.7 L1608.2 56.7"/>
 </g>
 <path d="M1610.3 56.5 L1612.8 54.6 L1612.8 58.4 Z" fill="#ffffff"/>
 <g fill="none" stroke="#c6c6c6" stroke-width="1.3" stroke-linecap="round">
  <path d="M1635.9 46.8 L1638.8 57.6"/>
  <path d="M1641.2 57.2 L1641.2 48.4 M1641.2 50.6 Q1642.6 48.2 1644.6 48.2 Q1647.2 48.2 1647.2 51 L1647.2 57.2"/>
 </g>
 <!-- top right buttons -->
 <path d="M1602 0 L1628 0 L1628 13.6 L1605 13.6 Q1602 13.6 1602 10.6 Z" fill="#2a66a6"/>
 <rect x="1609.6" y="0" width="4" height="7.8" fill="#ffffff"/>
 <rect x="1616.6" y="0" width="4.6" height="7.8" fill="#ffffff"/>
 <rect x="1628.7" y="0" width="20.3" height="13.6" fill="#484848"/>
 <rect x="1636.7" y="0" width="11.1" height="1.6" fill="#c8c8c8"/>
 <rect x="1636.7" y="4.2" width="11.1" height="3.6" fill="#c8c8c8"/>
</svg>


<!-- arrow -->
<svg class="abs" style="left:1150px;top:340px" width="200" height="160" viewBox="1150 340 200 160">
 <path d="M1165 350 L1182.8 354.1 L1181.3 357.8 L1339.5 490.8 L1176.3 364.5 L1173.1 366.8 Z" fill="#f23b3b"/>
</svg>

</body></html>
